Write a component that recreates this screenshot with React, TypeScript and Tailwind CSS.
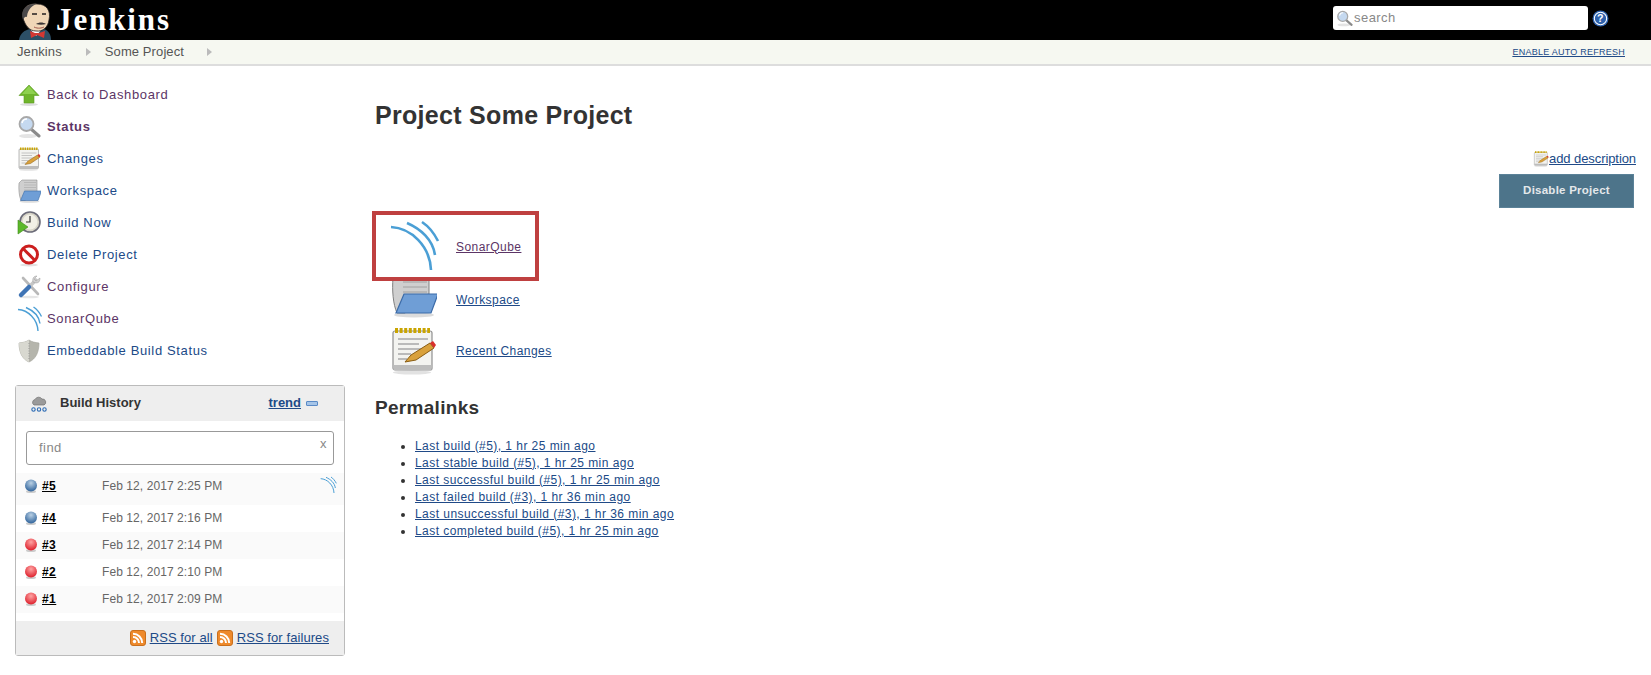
import { useId } from "react";
import type { ReactNode } from "react";

const link = "text-[#204a87]";
const visited = "text-[#5c3566]";

function Arcs({ size, width = 2.6 }: { size: number; width?: number }) {
  return (
    <svg width={size} height={size} viewBox="0 0 48 48" fill="none" stroke="#4b9fd5" strokeWidth={width} className="overflow-visible">
      <path d="M2 5 C22 6 41 24 42 48" />
      <path d="M18 1 C32 7 44 18 46 33" />
      <path d="M33 0 C39 4 45 11 49 19" />
    </svg>
  );
}

function ArrowUp() {
  return (
    <svg width="24" height="24" viewBox="0 0 24 24">
      <ellipse cx="12" cy="21.5" rx="9" ry="1.5" fill="#ddd" />
      <path d="M12 2 L22 12.5 H17 V20 H7 V12.5 H2 Z" fill="#6fb52c" stroke="#5a9a1e" strokeWidth="0.6" />
      <path d="M12 3 L5 11 H19 Z" fill="#8fd14f" />
    </svg>
  );
}

function Magnifier({ size = 24 }: { size?: number }) {
  return (
    <svg width={size} height={size} viewBox="0 0 24 24">
      <ellipse cx="11" cy="21" rx="9" ry="2" fill="#e4e4e4" />
      <path d="M14 14 L22 21" stroke="#8a8a8a" strokeWidth="3" strokeLinecap="round" />
      <circle cx="9.5" cy="9" r="7" fill="#c5d9f0" stroke="#a8a8a8" strokeWidth="1.8" />
      <path d="M5 8 a5 5 0 0 1 5 -4" stroke="#fff" strokeWidth="1.5" fill="none" />
    </svg>
  );
}

function Notepad({ size = 24 }: { size?: number }) {
  return (
    <svg width={size} height={size} viewBox="0 0 48 48">
      <ellipse cx="23" cy="45.5" rx="19" ry="2" fill="#e2e2e2" />
      <rect x="4" y="4" width="39" height="39" rx="2" fill="#f3f3f0" stroke="#8f8f8f" strokeWidth="1.2" />
      <rect x="4.5" y="38" width="38" height="5" fill="#bdbdbd" />
      <path d="M6 3.5 H41" stroke="#c9a400" strokeWidth="5" strokeDasharray="3 1.6" />
      <path d="M9 12 H39 M9 17 H30 M9 22 H37 M9 27 H22 M9 32 H18" stroke="#a8a8a8" strokeWidth="1.3" />
      <path d="M16 35 L22 28 L41 16 L45 21 L27 33 Z" fill="#d9a13b" stroke="#8a5d12" strokeWidth="1" />
      <path d="M41 16 L45 21 L47 18 L44 14 Z" fill="#d9302c" />
    </svg>
  );
}

function Folder({ size = 24 }: { size?: number }) {
  return (
    <svg width={size} height={size} viewBox="0 0 48 48">
      <ellipse cx="25" cy="45" rx="20" ry="2.5" fill="#dcdcdc" />
      <path d="M4 8 C3 20 4 34 8 43 H16 L40 24 V2 H10 Z" fill="#cfcfcf" stroke="#7f7f7f" />
      <path d="M14 7 H38 M14 12 H38 M14 17 H38 M14 22 H38" stroke="#a0a0a0" />
      <path d="M15 24 H49 L42 43 H7 Z" fill="#6f9ed6" stroke="#3b6ba8" strokeWidth="1.2" />
    </svg>
  );
}

function BuildNow() {
  return (
    <svg width="24" height="24" viewBox="0 0 24 24">
      <circle cx="13" cy="11" r="10" fill="#d8d5c8" stroke="#6b6b78" strokeWidth="1.6" />
      <circle cx="13" cy="11" r="7.5" fill="#f2f0e6" />
      <path d="M13 5 V11 H9" stroke="#333" strokeWidth="1.2" fill="none" />
      <path d="M1 9 L11 16 L1 23 Z" fill="#5cb82a" stroke="#3e8a17" strokeWidth="0.6" />
    </svg>
  );
}

function NoEntry() {
  return (
    <svg width="24" height="24" viewBox="0 0 24 24">
      <ellipse cx="12" cy="22" rx="9" ry="1.5" fill="#e2e2e2" />
      <circle cx="12" cy="11.5" r="8.5" fill="#fff" stroke="#cc1f1f" strokeWidth="3" />
      <path d="M6 5.5 L18 17.5" stroke="#cc1f1f" strokeWidth="3" />
    </svg>
  );
}

function Tools() {
  return (
    <svg width="24" height="24" viewBox="0 0 24 24">
      <ellipse cx="12" cy="22" rx="10" ry="1.3" fill="#e6e6e6" />
      <path d="M6 3 L21 19" stroke="#b9b9b9" strokeWidth="2.6" strokeLinecap="round" />
      <path d="M20 4 L11 13" stroke="#c6c6c6" strokeWidth="3.5" />
      <path d="M23 3 L19 6 L17 4 L20 1 C17 1 15 3 16 7 L19 8 C22 8 23 6 23 3 Z" fill="#d2d2d2" stroke="#9c9c9c" strokeWidth="0.5" />
      <path d="M12 12 L4 20" stroke="#3f74b5" strokeWidth="4.5" strokeLinecap="round" />
    </svg>
  );
}

function Shield() {
  return (
    <svg width="24" height="24" viewBox="0 0 24 24">
      <path d="M12 1 C15 3 18 3.5 22 4 C22 13 19 20 12 23 C5 20 2 13 2 4 C6 3.5 9 3 12 1 Z" fill="#b5b5ac" stroke="#a3a39a" strokeWidth="0.6" />
      <path d="M12 1 C9 3 6 3.5 2 4 C2 13 5 20 12 23 Z" fill="#d8d8d0" />
      <path d="M12 4 V20" stroke="#999" strokeWidth="1" strokeDasharray="1 1.5" />
    </svg>
  );
}

function Ball({ red }: { red?: boolean }) {
  const id = useId();
  return (
    <svg width="14" height="14" viewBox="0 0 14 14" className="mt-[2px] shrink-0">
      <defs>
        <radialGradient id={id} cx="50%" cy="30%" r="70%">
          <stop offset="0%" stopColor={red ? "#ffa3a3" : "#b9d0e4"} />
          <stop offset="100%" stopColor={red ? "#dd1f2b" : "#2f639b"} />
        </radialGradient>
      </defs>
      <ellipse cx="7" cy="12.5" rx="5" ry="1.5" fill="#ccc" />
      <circle cx="7" cy="6.5" r="6" fill={`url(#${id})`} />
    </svg>
  );
}

function Rss() {
  return (
    <svg width="16" height="16" viewBox="0 0 16 16">
      <rect x="0.5" y="0.5" width="15" height="15" rx="2.5" fill="#ee8a2c" stroke="#c96f1c" />
      <circle cx="4.5" cy="11.5" r="1.7" fill="#fff" />
      <path d="M3 7 A6 6 0 0 1 9 13 M3 3.8 A9.2 9.2 0 0 1 12.2 13" stroke="#fff" strokeWidth="2" fill="none" />
    </svg>
  );
}

function Weather() {
  return (
    <svg width="18" height="18" viewBox="0 0 18 18">
      <path d="M4 10 a3 3 0 0 1 1 -5.5 a4 4 0 0 1 7 -.5 a3.2 3.2 0 0 1 2 6 Z" fill="#9a9a9a" stroke="#707070" strokeWidth="0.7" />
      <circle cx="3.5" cy="14.5" r="1.7" fill="none" stroke="#2f6db5" strokeWidth="1.1" />
      <circle cx="9" cy="14.5" r="1.7" fill="none" stroke="#2f6db5" strokeWidth="1.1" />
      <circle cx="14.5" cy="14.5" r="1.7" fill="none" stroke="#2f6db5" strokeWidth="1.1" />
    </svg>
  );
}

function Butler() {
  return (
    <svg width="36" height="40" viewBox="0 0 36 40">
      <path d="M1 40 C2 33 7 30 12 29 L26 29 C31 31 33 35 33 40 Z" fill="#2c4f66" />
      <path d="M12 29 L18 36 L24 29 Z" fill="#fff" />
      <path d="M12 31 L17 33 L21 33 L27 31 L26 38 L19 35 L13 38 Z" fill="#d33833" />
      <path d="M5 18 C3 8 10 3 19 4 C29 4 33 11 31 20 C30 27 25 32 18 31 C11 31 7 25 5 18 Z" fill="#f0d6b7" stroke="#231f20" strokeWidth="0.8" />
      <path d="M5 20 C2 10 8 4 18 4 C12 7 9 12 9 17 C7 16 6 18 5 20 Z" fill="#4a4849" />
      <path d="M14 14 H19 M24 14 H28" stroke="#231f20" strokeWidth="1.3" />
      <path d="M18 24 C21 22 25 22 28 24 C25 25 21 25 18 24 Z" fill="#3b3536" />
      <path d="M16 27 C20 29 24 28 26 27" stroke="#a0564a" strokeWidth="1" fill="none" />
    </svg>
  );
}

function Arrow() {
  return <span className="inline-block w-0 h-0 border-y-[4px] border-y-transparent border-l-[5px] border-l-[#bbb]" />;
}

const sideItems: { label: string; icon: ReactNode; seen?: boolean; bold?: boolean }[] = [
  { label: "Back to Dashboard", icon: <ArrowUp />, seen: true },
  { label: "Status", icon: <Magnifier />, seen: true, bold: true },
  { label: "Changes", icon: <Notepad /> },
  { label: "Workspace", icon: <Folder /> },
  { label: "Build Now", icon: <BuildNow /> },
  { label: "Delete Project", icon: <NoEntry /> },
  { label: "Configure", icon: <Tools />, seen: true },
  { label: "SonarQube", icon: <Arcs size={24} width={2.8} />, seen: true },
  { label: "Embeddable Build Status", icon: <Shield /> },
];

const builds = [
  { id: "#5", date: "Feb 12, 2017 2:25 PM", tall: true, shade: true },
  { id: "#4", date: "Feb 12, 2017 2:16 PM", tall: false, shade: false },
  { id: "#3", date: "Feb 12, 2017 2:14 PM", tall: false, shade: true, red: true },
  { id: "#2", date: "Feb 12, 2017 2:10 PM", tall: false, shade: false, red: true },
  { id: "#1", date: "Feb 12, 2017 2:09 PM", tall: false, shade: true, red: true },
];

const permalinks = [
  "Last build (#5), 1 hr 25 min ago",
  "Last stable build (#5), 1 hr 25 min ago",
  "Last successful build (#5), 1 hr 25 min ago",
  "Last failed build (#3), 1 hr 36 min ago",
  "Last unsuccessful build (#3), 1 hr 36 min ago",
  "Last completed build (#5), 1 hr 25 min ago",
];

export default function App() {
  return (
    <div className="min-h-[675px] bg-white text-[#333] text-[13px] tracking-[0.45px] font-['Liberation_Sans',Arial,sans-serif]">
      {/* HEADER */}
      <div className="h-10 bg-black flex items-center overflow-hidden">
        <div className="ml-[18px] self-end h-10">
          <Butler />
        </div>
        <span className="ml-[2px] text-[31px] font-bold tracking-[1.9px] text-white font-['Liberation_Serif',serif]">Jenkins</span>
        <div className="ml-auto mr-[42px] mb-[4px] flex items-center gap-[4px]">
          <div className="w-[255px] h-6 bg-white rounded-[3px] flex items-center pl-[3px]">
            <Magnifier size={17} />
            <span className="text-[#888] ml-[1px]">search</span>
          </div>
          <svg width="17" height="17" viewBox="0 0 16 16">
            <circle cx="8" cy="8" r="7.5" fill="#2f62ad" />
            <circle cx="8" cy="8" r="5.8" fill="none" stroke="#fff" />
            <text x="8" y="11.5" textAnchor="middle" fontSize="10" fontWeight="700" fill="#fff" fontFamily="Liberation Sans">?</text>
          </svg>
        </div>
      </div>

      {/* BREADCRUMBS */}
      <div className="h-[26px] bg-[#f6f8f1] border-b-2 border-[#ddd] flex items-center pl-[17px] pr-[26px] text-[#555] tracking-[0.1px]">
        <span>Jenkins</span>
        <span className="ml-[24px] mr-[14px] flex"><Arrow /></span>
        <span>Some Project</span>
        <span className="ml-[23px] flex"><Arrow /></span>
        <a className={`ml-auto mt-[2px] text-[9px] tracking-[0.25px] underline ${link}`}>ENABLE AUTO REFRESH</a>
      </div>

      <div className="flex">
        {/* SIDE PANEL */}
        <div className="w-[375px] shrink-0 pl-[15px]">
          <div className="pt-[13px] pl-[2px] flex flex-col tracking-[0.64px]">
            {sideItems.map((item) => (
              <div key={item.label} className="h-8 flex items-center">
                <div className="w-[24px] h-[24px] flex">{item.icon}</div>
                <span className={`ml-[6px] ${item.seen ? visited : link} ${item.bold ? "font-bold" : ""}`}>{item.label}</span>
              </div>
            ))}
          </div>

          <div className="mt-[18px] w-[330px] border border-[#bbb] rounded-[3px]">
            <div className="h-[35px] bg-[#eee] flex items-center pl-[14px] pr-[26px] tracking-normal">
              <Weather />
              <span className="ml-[12px] mb-[2px] font-bold text-[#333]">Build History</span>
              <a className={`ml-auto mb-[2px] font-bold underline ${link}`}>trend</a>
              <span className="ml-[5px] w-3 h-[5px] bg-[#a6c5e8] border border-[#5a8ac6] rounded-[1px]" />
            </div>
            <div className="px-[10px] pt-[10px]">
              <div className="h-[34px] border border-[#999] rounded-[3px] flex justify-between pl-[12px] pr-[6px] text-[#888]">
                <span className="self-center">find</span>
                <span className="mt-[2px]">x</span>
              </div>
            </div>
            <div className="mt-[8px]">
              {builds.map((b) => (
                <div key={b.id} className={`flex pl-[8px] pr-[8px] pt-[4px] text-[12px] ${b.tall ? "h-[32px]" : "h-[27px]"} ${b.shade ? "bg-[#fafafa]" : "bg-white"}`}>
                  <Ball red={b.red} />
                  <a className="ml-[4px] font-bold underline text-black w-[60px]">{b.id}</a>
                  <span className="text-[#666] tracking-[0.08px]">{b.date}</span>
                  {b.tall && <div className="ml-auto"><Arcs size={16} width={3} /></div>}
                </div>
              ))}
            </div>
            <div className="mt-[8px] h-[34px] bg-[#eee] flex items-center justify-end pr-[15px] gap-[4px] tracking-[0.08px]">
              <Rss />
              <a className={`underline ${link}`}>RSS for all</a>
              <Rss />
              <a className={`underline ${link}`}>RSS for failures</a>
            </div>
          </div>
        </div>

        {/* MAIN */}
        <div className="flex-1 pr-[15px]">
          <h1 className="mt-[35px] text-[25px] leading-[28px] font-bold tracking-[0.3px] text-[#333]">Project Some Project</h1>
          <div className="mt-[20px] flex justify-end items-center tracking-[-0.08px]">
            <Notepad size={16} />
            <a className={`underline ${link}`}>add description</a>
          </div>
          <div className="mt-[5px] flex justify-end pr-[2px]">
            <div className="w-[135px] h-[34px] bg-[#4d748a] border border-[#5b8298] flex items-center justify-center text-[11.5px] tracking-[0.25px] font-bold text-[#e4e8ea]">Disable Project</div>
          </div>

          <div className="mt-[3px]">
            <div className="relative z-10 -ml-[3px] w-[167px] h-[70px] bg-white border-[4px] border-[#bf4040] flex items-center pl-[13px]">
              <Arcs size={48} />
              <a className={`ml-[19px] mt-[2px] text-[12px] underline ${visited}`}>SonarQube</a>
            </div>
            <div className="-mt-[7px] flex items-center h-[52px] pl-[14px]">
              <div className="mb-[12px] flex"><Folder size={48} /></div>
              <a className={`ml-[19px] text-[12px] underline ${link}`}>Workspace</a>
            </div>
            <div className="-mt-[1px] flex items-center h-[52px] pl-[14px]">
              <Notepad size={48} />
              <a className={`ml-[19px] text-[12px] underline ${link}`}>Recent Changes</a>
            </div>
          </div>

          <h2 className="mt-[20px] text-[19px] leading-[22px] font-bold tracking-[0.3px] text-[#333]">Permalinks</h2>
          <ul className="mt-[19px] ml-[40px] list-disc text-[12px] leading-[17px]">
            {permalinks.map((p) => (
              <li key={p}><a className={`underline ${link}`}>{p}</a></li>
            ))}
          </ul>
        </div>
      </div>
    </div>
  );
}
